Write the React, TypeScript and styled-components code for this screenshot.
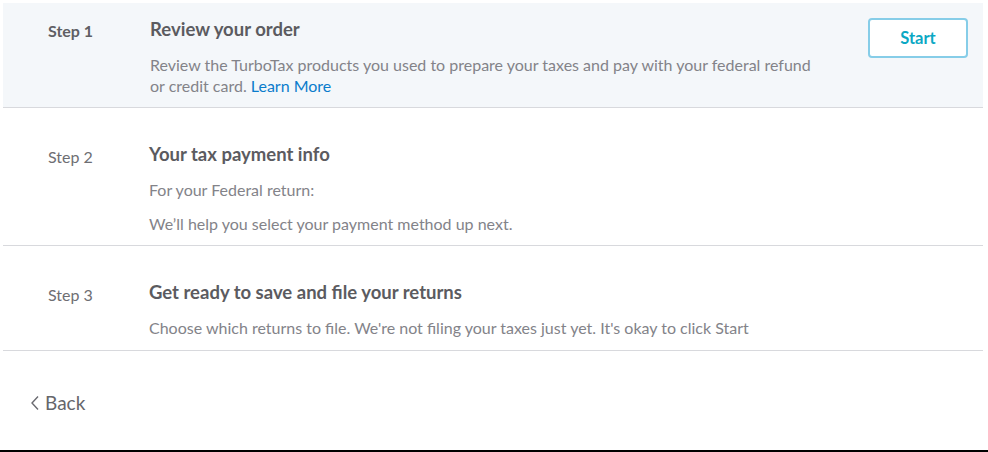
import React from "react";
import styled, { createGlobalStyle } from "styled-components";

const Global = createGlobalStyle`
  html, body { margin: 0; padding: 0; background: #fff; }
  body { font-family: Lato, "Open Sans", sans-serif; }
`;

const Page = styled.div`
  height: 452px;
  box-sizing: border-box;
  display: flex;
  flex-direction: column;
  border-bottom: 2px solid #000;
  padding: 3px 5px 0 3px;
`;

const Row = styled.div<{ $active?: boolean; $top: number; $bottom: number }>`
  display: grid;
  grid-template-columns: 146px 1fr 115px;
  padding: ${(p) => p.$top}px 0 ${(p) => p.$bottom}px;
  background: ${(p) => (p.$active ? "#f4f7fa" : "#fff")};
  border-bottom: 1px solid #d8d9dd;
`;

const StepLabel = styled.div<{ $active?: boolean }>`
  padding-left: 45px;
  padding-top: ${(p) => (p.$active ? 2 : 3)}px;
  font-size: 16px;
  line-height: 24px;
  font-weight: ${(p) => (p.$active ? 700 : 400)};
  color: ${(p) => (p.$active ? "#5f5f64" : "#6e6e73")};
`;

const Content = styled.div<{ $shift?: number }>`
  display: flex;
  flex-direction: column;
  gap: 13px;
  padding-left: ${(p) => p.$shift ?? 0}px;
`;

const Title = styled.div`
  font-size: 18.5px;
  line-height: 24px;
  font-weight: 700;
  color: #5b5b60;
`;

const Text = styled.div`
  font-size: 16px;
  line-height: 21px;
  color: #838389;
  max-width: 670px;
`;

const Link = styled.a`
  color: #0a7ccc;
  text-decoration: none;
`;

const Actions = styled.div`
  display: flex;
  justify-content: flex-start;
  align-items: flex-start;
  padding-top: 1px;
`;

const StartButton = styled.button`
  width: 100px;
  height: 40px;
  border: 2px solid #86cde8;
  border-radius: 4px;
  background: #fff;
  color: #0ba8c4;
  font-family: Lato, "Open Sans", sans-serif;
  font-weight: 700;
  font-size: 16.5px;
  cursor: pointer;
`;

const Footer = styled.div`
  flex: 1;
  display: flex;
  align-items: flex-start;
  padding: 40px 0 0 27px;
`;

const BackLink = styled.a`
  display: flex;
  align-items: center;
  gap: 5px;
  font-size: 19px;
  line-height: 24px;
  color: #66666b;
  text-decoration: none;
  cursor: pointer;
`;

const Chevron = () => (
  <svg width="10" height="16" viewBox="0 0 10 16" fill="none">
    <path d="M8 1.5 L2 8 L8 14.5" stroke="#6a6a70" strokeWidth="1.4" />
  </svg>
);

export default function App() {
  return (
    <>
      <Global />
      <Page>
        <Row $active $top={14} $bottom={11}>
          <StepLabel $active>Step 1</StepLabel>
          <Content $shift={1}>
            <Title>Review your order</Title>
            <Text>
              Review the TurboTax products you used to prepare your taxes and pay with your federal refund
              or credit card. <Link href="#">Learn More</Link>
            </Text>
          </Content>
          <Actions>
            <StartButton>Start</StartButton>
          </Actions>
        </Row>
        <Row $top={34} $bottom={11}>
          <StepLabel>Step 2</StepLabel>
          <Content>
            <Title>Your tax payment info</Title>
            <Text>For your Federal return:</Text>
            <Text>We’ll help you select your payment method up next.</Text>
          </Content>
          <div />
        </Row>
        <Row $top={34} $bottom={12}>
          <StepLabel>Step 3</StepLabel>
          <Content>
            <Title>Get ready to save and file your returns</Title>
            <Text>Choose which returns to file. We're not filing your taxes just yet. It's okay to click Start</Text>
          </Content>
          <div />
        </Row>
        <Footer>
          <BackLink>
            <Chevron />
            Back
          </BackLink>
        </Footer>
      </Page>
    </>
  );
}
